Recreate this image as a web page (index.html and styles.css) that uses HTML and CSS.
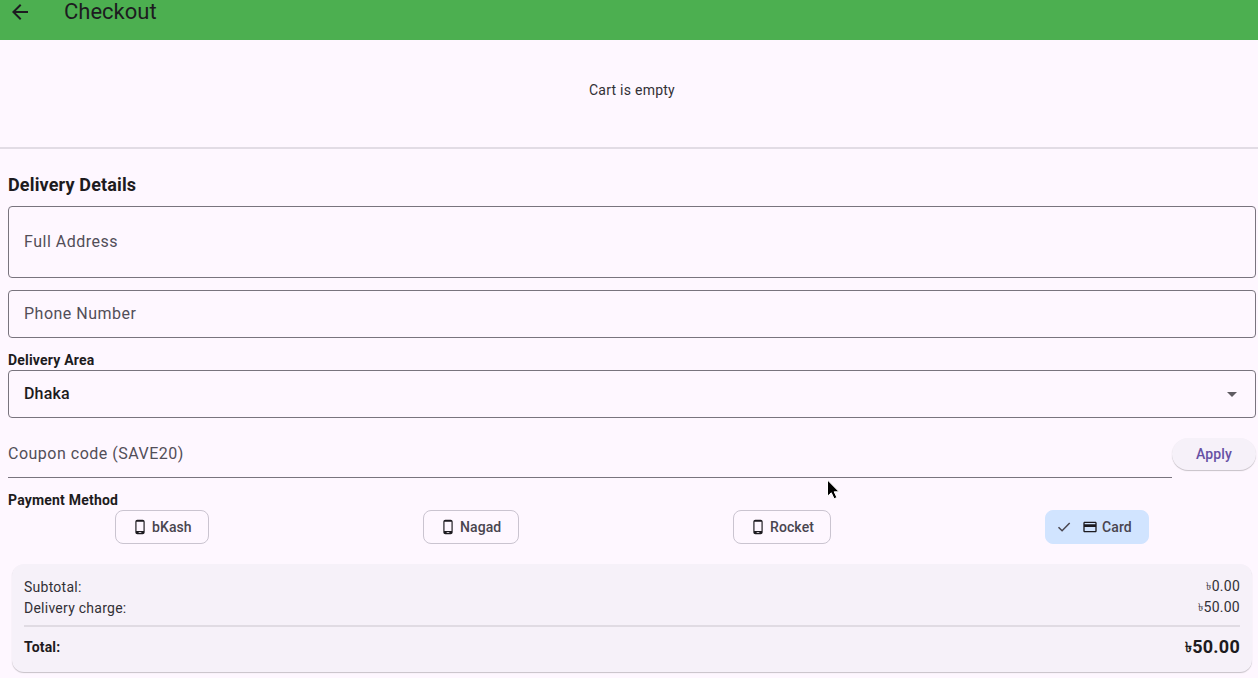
FILE: index.html
```html
<!DOCTYPE html>
<html lang="en">
<head>
<meta charset="utf-8">
<title>Checkout</title>
<link rel="stylesheet" href="styles.css">
</head>
<body>
<header class="appbar">
  <svg class="back" viewBox="0 0 24 24"><path d="M20 11H7.83l5.59-5.59L12 4l-8 8 8 8 1.41-1.41L7.83 13H20v-2z"/></svg>
  <h1 class="title">Checkout</h1>
</header>
<main>
  <section class="cart"><span>Cart is empty</span></section>
  <div class="details">
    <h2 class="heading">Delivery Details</h2>
    <div class="field address">Full Address</div>
    <div class="field">Phone Number</div>
    <h3 class="label">Delivery Area</h3>
    <div class="field select"><span>Dhaka</span>
      <svg class="caret" viewBox="0 0 24 24"><path d="M7 10l5 5 5-5z"/></svg>
    </div>
    <div class="coupon">
      <div class="coupon-input">Coupon code (SAVE20)</div>
      <button class="apply">Apply</button>
    </div>
    <h3 class="label payment">Payment Method</h3>
    <div class="chips">
      <div class="chip bkash"><svg class="icon" viewBox="0 0 24 24"><path d="M16 1H8C6.34 1 5 2.34 5 4v16c0 1.66 1.34 3 3 3h8c1.66 0 3-1.34 3-3V4c0-1.66-1.34-3-3-3zm-2 20h-4v-1h4v1zm3.25-3H6.75V4h10.5v14z"/></svg><span>bKash</span></div>
      <div class="chip nagad"><svg class="icon" viewBox="0 0 24 24"><path d="M16 1H8C6.34 1 5 2.34 5 4v16c0 1.66 1.34 3 3 3h8c1.66 0 3-1.34 3-3V4c0-1.66-1.34-3-3-3zm-2 20h-4v-1h4v1zm3.25-3H6.75V4h10.5v14z"/></svg><span>Nagad</span></div>
      <div class="chip rocket"><svg class="icon" viewBox="0 0 24 24"><path d="M16 1H8C6.34 1 5 2.34 5 4v16c0 1.66 1.34 3 3 3h8c1.66 0 3-1.34 3-3V4c0-1.66-1.34-3-3-3zm-2 20h-4v-1h4v1zm3.25-3H6.75V4h10.5v14z"/></svg><span>Rocket</span></div>
      <div class="chip card"><svg class="check" viewBox="0 0 18 18"><path d="M3.5 9.2l3.6 3.6 7.6-7.8"/></svg><svg class="icon" viewBox="0 0 24 24"><path d="M20 4H4c-1.11 0-1.99.89-1.99 2L2 18c0 1.11.89 2 2 2h16c1.11 0 2-.89 2-2V6c0-1.11-.89-2-2-2zm0 14H4v-6h16v6zm0-10H4V6h16v2z"/></svg><span>Card</span></div>
    </div>
  </div>
  <section class="summary">
    <div class="row"><span>Subtotal:</span><span class="amount"><span class="taka">৳</span>0.00</span></div>
    <div class="row"><span>Delivery charge:</span><span class="amount"><span class="taka">৳</span>50.00</span></div>
    <div class="rule"></div>
    <div class="row total"><span>Total:</span><span class="amount"><span class="taka">৳</span>50.00</span></div>
  </section>
</main>
<svg class="cursor" viewBox="0 0 14 22"><path d="M1.5 1v16.2l3.8-3.4 2.8 6 2.8-1.3-2.7-5.7h4.9z"/></svg>
</body>
</html>
```

FILE: styles.css
```css
* { box-sizing: border-box; }
body {
  margin: 0;
  height: 678px;
  overflow: hidden;
  background: #fef7ff;
  color: #1d1b20;
  font: 400 14px/20px Roboto, sans-serif;
  letter-spacing: 0.25px;
}
h1, h2, h3 { margin: 0; }
svg { display: block; flex: none; }
.appbar {
  display: flex;
  align-items: center;
  height: 40px;
  padding: 0 8px 16px;
  background: #4caf50;
}
.back { width: 24px; height: 24px; fill: #1d1b20; }
.title {
  margin-left: 32px;
  font-size: 22px;
  line-height: 28px;
  font-weight: 400;
  letter-spacing: 0;
}
.cart {
  display: flex;
  justify-content: center;
  height: 109px;
  padding: 40px 0 0 6px;
  border-bottom: 2px solid #e2dce5;
  color: #323036;
}
.details { padding: 24px 2px 0 8px; }
.heading {
  font-size: 18px;
  line-height: 24px;
  font-weight: 700;
  letter-spacing: 0.15px;
}
.field {
  display: flex;
  align-items: center;
  height: 48px;
  margin-top: 12px;
  padding: 0 11px 0 15px;
  border: 1px solid #79747e;
  border-radius: 4px;
  color: #524e58;
  font-size: 16px;
  letter-spacing: 0.5px;
}
.field.address { height: 72px; margin-top: 9px; }
.label {
  margin-top: 12px;
  font-size: 14px;
  line-height: 20px;
  font-weight: 700;
  letter-spacing: 0.2px;
}
.field.select {
  justify-content: space-between;
  margin-top: 0;
  color: #1d1b20;
  font-weight: 500;
  letter-spacing: 0.15px;
}
.caret { width: 24px; height: 24px; fill: #5f5c62; }
.coupon { display: flex; margin-top: 12px; align-items: center; }
.coupon-input {
  flex: 1;
  height: 48px;
  padding-top: 14px;
  border-bottom: 1px solid #79747e;
  color: #524e58;
  font-size: 16px;
  letter-spacing: 0.5px;
}
.apply {
  width: 84px;
  height: 32px;
  padding: 0;
  border: 0;
  border-radius: 16px;
  background: #f6f1f9;
  box-shadow: 0 1px 1px rgba(0, 0, 0, 0.22);
  color: #6750a4;
  font: 500 14px/20px Roboto, sans-serif;
  letter-spacing: 0.1px;
}
.chips { display: flex; justify-content: space-around; }
.chip {
  display: flex;
  align-items: center;
  height: 34px;
  padding-left: 16px;
  border: 1px solid #cac4d0;
  border-radius: 8px;
  color: #49454f;
  font-weight: 500;
  letter-spacing: 0.1px;
}
.icon { width: 16px; height: 16px; margin-right: 4px; fill: #1d1b20; }
.bkash { width: 94px; }
.nagad { width: 96px; }
.rocket { width: 98px; }
.chip.card { width: 104px; padding-left: 9px; border-color: #d1e4ff; background: #d1e4ff; }
.check { width: 18px; height: 18px; margin-right: 9px; fill: none; stroke: #49454f; stroke-width: 1.5; }
.summary {
  height: 108px;
  margin: 20px 6px 0 12px;
  padding: 12px;
  border-radius: 12px;
  background: #f6f1f9;
  box-shadow: 0 1px 1px rgba(0, 0, 0, 0.22);
}
.row { display: flex; justify-content: space-between; height: 21px; line-height: 22px; color: #323036; }
.amount { line-height: 20px; }
.taka { font-size: 0.76em; line-height: 1; vertical-align: 1px; }
.rule { height: 2px; margin-top: 7px; background: #e0dbe3; }
.row.total { height: 24px; margin-top: 8px; line-height: 24px; font-weight: 700; letter-spacing: 0.18px; color: #1d1b20; }
.total .amount { font-size: 18px; line-height: 24px; letter-spacing: 0.25px; }
.cursor {
  position: absolute;
  left: 826px;
  top: 479px;
  width: 14px;
  height: 22px;
  fill: #000;
  stroke: #fff;
  stroke-width: 1;
}
```
